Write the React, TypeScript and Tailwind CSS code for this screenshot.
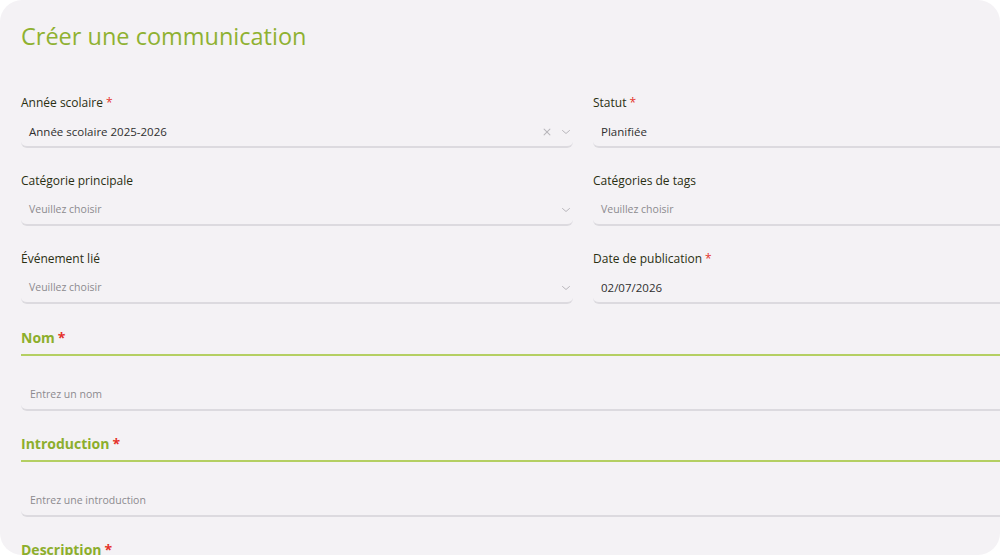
import React from 'react';

const font = { fontFamily: '"Open Sans", "Noto Sans", sans-serif' };

const Req = () => <span className="ml-[3px] text-[#e5322b]">*</span>;

const Chevron = () => (
  <svg width="12" height="12" viewBox="0 0 24 24" fill="none" stroke="#b9b7bc" strokeWidth="2" strokeLinecap="round" strokeLinejoin="round">
    <path d="m5 9 7 6 7-6" />
  </svg>
);

const Cross = () => (
  <svg width="10" height="10" viewBox="0 0 24 24" fill="none" stroke="#b9b7bc" strokeWidth="2.5" strokeLinecap="round">
    <path d="M5 5l14 14M19 5 5 19" />
  </svg>
);

interface FieldProps {
  label: string;
  required?: boolean;
  value?: string;
  placeholder?: string;
  select?: boolean;
  clearable?: boolean;
}

const Field: React.FC<FieldProps> = ({ label, required, value, placeholder, select, clearable }) => (
  <div className="flex flex-col">
    <label className="text-[12px] font-medium leading-[18px] text-[#2a2f12]">
      {label}
      {required && <Req />}
    </label>
    <div className="mt-[6px] flex h-[30px] items-center rounded-b-md border-b-2 border-[#dcdadf] pl-[8px] pr-[1px]">
      {value ? (
        <span className="flex-1 text-[11.5px] text-[#2f2f2f]">{value}</span>
      ) : (
        <span className="flex-1 text-[10.5px] text-[#8c8a8f]">{placeholder}</span>
      )}
      {clearable && (
        <span className="mr-[8px] flex items-center">
          <Cross />
        </span>
      )}
      {select && <Chevron />}
    </div>
  </div>
);

const Section: React.FC<{ title: string; placeholder: string }> = ({ title, placeholder }) => (
  <div className="flex flex-col">
    <div className="border-b-2 border-[#b4cf62] pb-[5px] text-[14px] font-bold leading-[22px] text-[#8cae2c]">
      {title}
      <Req />
    </div>
    <div className="mt-[25px] flex h-[30px] items-center rounded-b-md border-b-2 border-[#dcdadf] pl-[9px]">
      <span className="text-[10.5px] text-[#8c8a8f]">{placeholder}</span>
    </div>
  </div>
);

export default function App() {
  return (
    <div className="h-[555px] w-[1000px] overflow-hidden bg-white" style={font}>
      <div className="h-full w-full overflow-hidden rounded-[22px] bg-[#f4f2f5] pl-[21px] pt-[20px]">
        <h1 className="text-[23.5px] font-normal leading-[32px] text-[#8fb131]">Créer une communication</h1>

        <div className="mt-[42px] grid w-[1124px] grid-cols-[552px_552px] gap-x-[20px] gap-y-[24px]">
          <Field label="Année scolaire" required value="Année scolaire 2025-2026" select clearable />
          <Field label="Statut" required value="Planifiée" />
          <Field label="Catégorie principale" placeholder="Veuillez choisir" select />
          <Field label="Catégories de tags" placeholder="Veuillez choisir" />
          <Field label="Événement lié" placeholder="Veuillez choisir" select />
          <Field label="Date de publication" required value="02/07/2026" />
        </div>

        <div className="mt-[23px] flex w-[1124px] flex-col gap-[22px]">
          <Section title="Nom" placeholder="Entrez un nom" />
          <Section title="Introduction" placeholder="Entrez une introduction" />
          <Section title="Description" placeholder="Entrez une description" />
        </div>
      </div>
    </div>
  );
}
